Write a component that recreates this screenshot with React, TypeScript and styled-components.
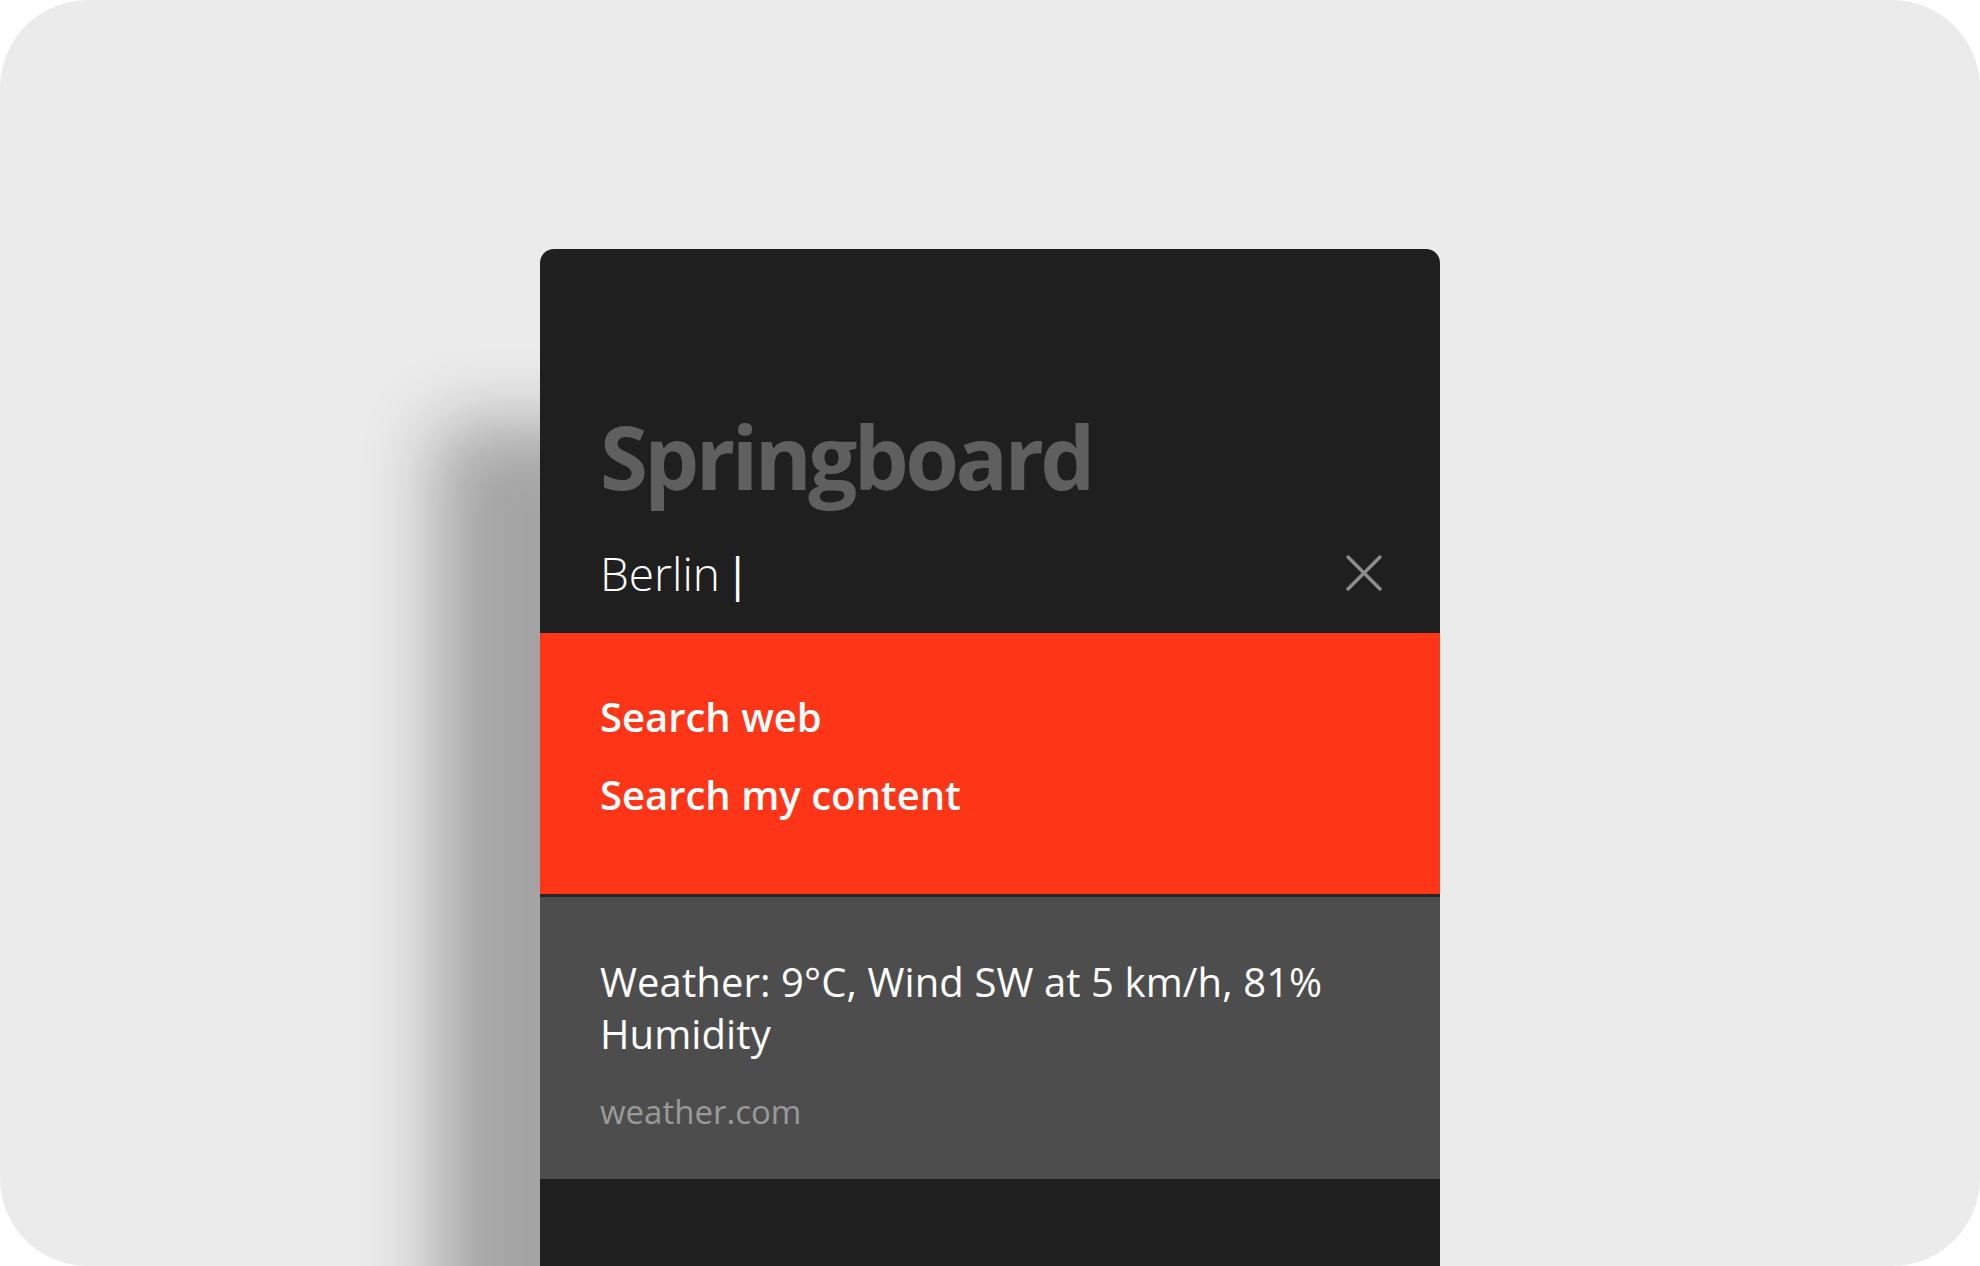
import styled, {createGlobalStyle} from 'styled-components';

const GlobalStyle = createGlobalStyle`
  html, body {
    margin: 0;
    padding: 0;
    background: #ffffff;
  }

  body {
    font-family: 'Open Sans', 'Noto Sans', sans-serif;
  }
`;

export default function App() {
  return (
    <>
      <GlobalStyle/>
      <Stage>
        <Panel>
          <Header>
            <Title>Springboard</Title>
            <SearchRow>
              <Query>Berlin<Caret>|</Caret></Query>
              <ClearButton type={'button'} aria-label={'Clear search'}>
                <svg width="36" height="36" viewBox="0 0 36 36" fill="none">
                  <path d="M2 2 L34 34 M34 2 L2 34" stroke="#8c8c8c" strokeWidth="3.4" strokeLinecap="round"/>
                </svg>
              </ClearButton>
            </SearchRow>
          </Header>

          <Actions>
            <Action>Search web</Action>
            <Action>Search my content</Action>
          </Actions>

          <Result>
            <ResultText>Weather: 9°C, Wind SW at 5 km/h, 81% Humidity</ResultText>
            <ResultSource>weather.com</ResultSource>
          </Result>
        </Panel>
      </Stage>
    </>
  )
}

const Stage = styled.div `
  width: 1980px;
  height: 1266px;
  box-sizing: border-box;
  padding-top: 249px;
  display: flex;
  justify-content: center;
  background: #ebebeb;
  border-radius: 88px;
  overflow: hidden;
`;

const Panel = styled.div `
  width: 900px;
  display: flex;
  flex-direction: column;
  background: #1f1f1f;
  border-radius: 14px 14px 0 0;
  box-shadow: -104px 175px 72px rgba(0, 0, 0, 0.3);
`;

const Header = styled.div `
  height: 384px;
  box-sizing: border-box;
  padding: 0 58px 30px 60px;
  display: flex;
  flex-direction: column;
  justify-content: flex-end;
`;

const Title = styled.h1 `
  margin: 0 0 37px;
  font-size: 87px;
  line-height: 100px;
  font-weight: 700;
  color: #5f5f5f;
  letter-spacing: -3.6px;
`;

const SearchRow = styled.div `
  display: flex;
  align-items: center;
  justify-content: space-between;
  height: 60px;
`;

const Query = styled.div `
  font-size: 46px;
  line-height: 60px;
  font-weight: 300;
  color: #ffffff;
`;

const Caret = styled.span `
  font-weight: 400;
  margin-left: 5px;
`;

const ClearButton = styled.button `
  padding: 0;
  border: none;
  background: none;
  width: 36px;
  height: 36px;
  display: flex;
`;

const Actions = styled.div `
  height: 261px;
  box-sizing: border-box;
  padding: 45px 60px 0;
  display: flex;
  flex-direction: column;
  background: #ff3518;
`;

const Action = styled.div `
  font-size: 40px;
  line-height: 78px;
  font-weight: 600;
  color: #ffffff;
`;

const Result = styled.div `
  height: 285px;
  box-sizing: border-box;
  border-top: 3px solid #262626;
  padding: 59px 60px 0;
  display: flex;
  flex-direction: column;
  gap: 30px;
  background: #4d4d4d;
`;

const ResultText = styled.div `
  font-size: 40px;
  line-height: 52px;
  font-weight: 400;
  color: #ffffff;
  letter-spacing: 0.1px;
  max-width: 780px;
`;

const ResultSource = styled.div `
  font-size: 33px;
  line-height: 44px;
  font-weight: 400;
  color: #9a9a9a;
`;
